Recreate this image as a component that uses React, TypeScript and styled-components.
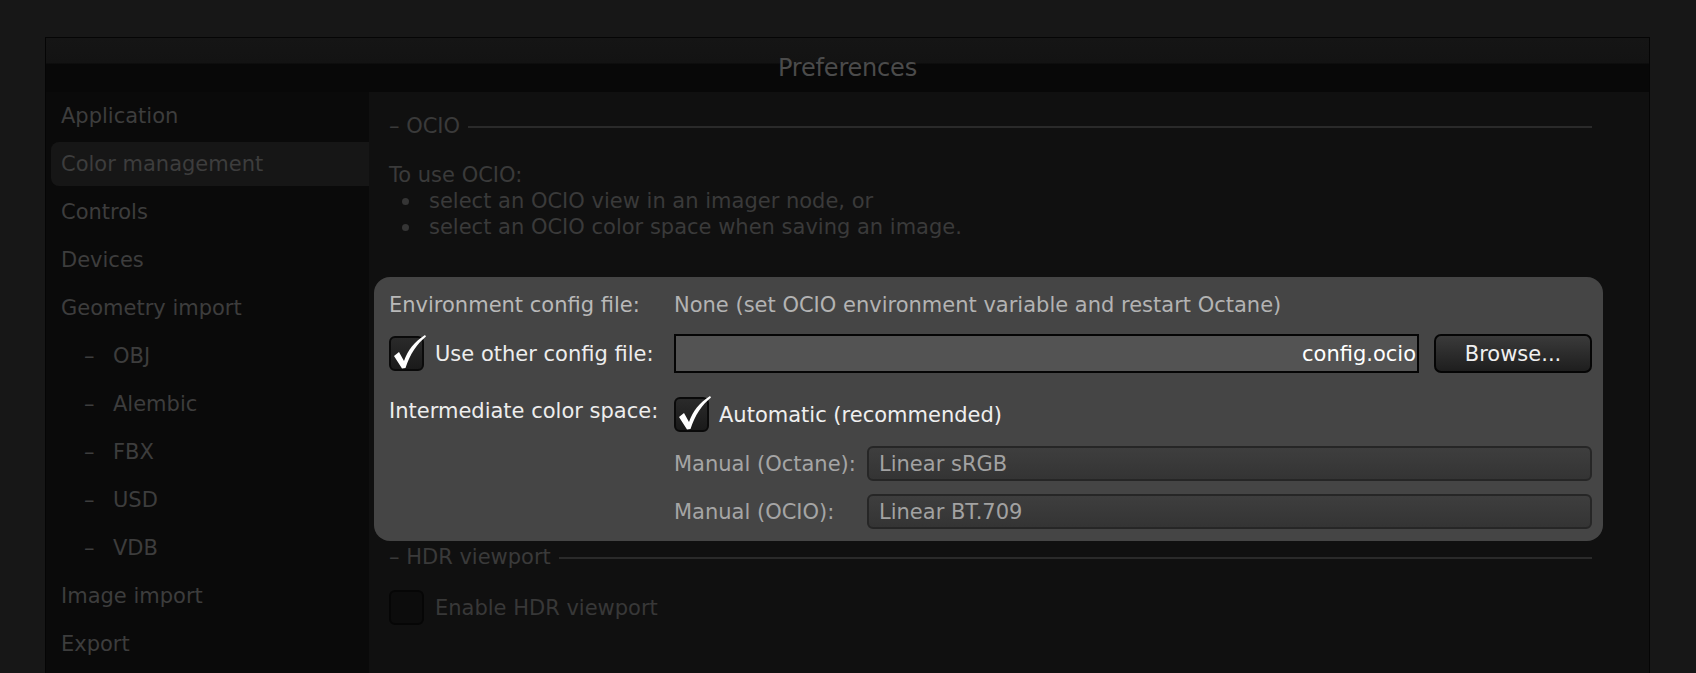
import styled, { createGlobalStyle } from 'styled-components';

const GlobalStyle = createGlobalStyle`
    html, body {
        margin: 0;
        padding: 0;
        height: 100%;
        overflow: hidden;
        background: #171717;
        font-family: "DejaVu Sans", "Liberation Sans", sans-serif;
    }
`;

const Page = styled.div`
    padding: 37px 46px 0 45px;
`;

const Dialog = styled.div`
    border: 1px solid #050505;
    border-bottom: none;
    background: #101010;
    height: 700px;
    display: flex;
    flex-direction: column;
`;

const TitleBar = styled.div`
    height: 54px;
    box-sizing: border-box;
    padding-top: 5px;
    display: flex;
    align-items: center;
    justify-content: center;
    background: linear-gradient(#151515 0, #131313 25px, #080808 26px, #080808 100%);
    color: #4b4b4b;
    font-size: 24px;
    letter-spacing: -0.2px;
`;

const Body = styled.div`
    flex: 1;
    display: flex;
`;

const Sidebar = styled.div`
    width: 323px;
    background: #0a0a0a;
    display: flex;
    flex-direction: column;
`;

const NavItem = styled.div<{ $selected?: boolean; $sub?: boolean }>`
    height: ${(p) => (p.$selected ? '44px' : '48px')};
    margin: ${(p) => (p.$selected ? '2px 0 2px 5px' : '0 0 0 5px')};
    padding-left: ${(p) => (p.$sub ? '33px' : '10px')};
    display: flex;
    align-items: center;
    gap: 19px;
    font-size: 21px;
    color: #3d3d3d;
    background: ${(p) => (p.$selected ? '#161616' : 'transparent')};
    border-radius: 8px 0 0 8px;
`;

const Dash = styled.span`
    width: 10px;
`;

const Content = styled.div`
    flex: 1;
    padding: 22px 57px 0 20px;
    display: flex;
    flex-direction: column;
    font-size: 21px;
    color: #3a3a3a;
`;

const SectionHeader = styled.div<{ $top?: number }>`
    display: flex;
    align-items: center;
    gap: 8px;
    height: 24px;
    margin-top: ${(p) => p.$top ?? 0}px;
    color: #3a3a3a;

    &::after {
        content: '';
        flex: 1;
        height: 2px;
        margin-top: 2px;
        background: #2a2a2a;
    }
`;

const Intro = styled.div`
    margin-top: 24px;
    line-height: 26px;
`;

const BulletList = styled.ul`
    margin: 0;
    padding-left: 40px;
    list-style: none;

    li {
        position: relative;
    }

    li::before {
        content: '';
        position: absolute;
        left: -27px;
        top: 10px;
        width: 7px;
        height: 7px;
        border-radius: 50%;
        background: #353535;
    }
`;

const Highlight = styled.div`
    margin: 37px -11px 0 -15px;
    padding: 14px 11px 12px 15px;
    background: #454545;
    border-radius: 16px;
    display: flex;
    flex-direction: column;
`;

const Row = styled.div<{ $top?: number; $align?: string }>`
    display: flex;
    align-items: ${(p) => p.$align ?? 'center'};
    margin-top: ${(p) => p.$top ?? 0}px;
`;

const LabelCell = styled.div<{ $color?: string }>`
    width: 285px;
    flex-shrink: 0;
    display: flex;
    align-items: center;
    gap: 11px;
    color: ${(p) => p.$color ?? '#ededed'};
    line-height: 28px;
`;

const Value = styled.div<{ $color?: string }>`
    color: ${(p) => p.$color ?? '#b3b3b3'};
    line-height: 28px;
`;

const FieldGroup = styled.div`
    flex: 1;
    display: flex;
    gap: 15px;
`;

const TextField = styled.div`
    flex: 1;
    height: 39px;
    box-sizing: border-box;
    border: 2px solid #050505;
    background: #535353;
    color: #ffffff;
    display: flex;
    align-items: center;
    justify-content: flex-end;
    padding-right: 1px;
`;

const Button = styled.div`
    width: 158px;
    height: 39px;
    box-sizing: border-box;
    border: 2px solid #050505;
    border-radius: 7px;
    background: linear-gradient(#3a3a3a, #1e1e1e);
    color: #f0f0f0;
    display: flex;
    align-items: center;
    justify-content: center;
`;

const Column = styled.div`
    flex: 1;
    display: flex;
    flex-direction: column;
`;

const SubRow = styled.div<{ $top?: number }>`
    display: flex;
    align-items: center;
    margin-top: ${(p) => p.$top ?? 0}px;
`;

const SubLabel = styled.div`
    width: 193px;
    color: #a5a5a5;
`;

const Dropdown = styled.div`
    flex: 1;
    height: 35px;
    box-sizing: border-box;
    border: 2px solid #262626;
    border-radius: 6px;
    background: linear-gradient(#3e3e3e, #343434);
    color: #a2a2a2;
    display: flex;
    align-items: center;
    padding-left: 10px;
`;

const Box = styled.div<{ $dim?: boolean }>`
    width: 35px;
    height: 35px;
    box-sizing: border-box;
    flex-shrink: 0;
    border: 2px solid ${(p) => (p.$dim ? '#060606' : '#0a0a0a')};
    border-radius: 6px;
    background: ${(p) => (p.$dim ? '#0c0c0c' : 'linear-gradient(#2a2a2a, #1a1a1a)')};
    position: relative;

    svg {
        position: absolute;
        left: 1px;
        top: -4px;
        overflow: visible;
    }
`;

const Check = () => (
    <svg width="34" height="37" viewBox="0 0 34 37">
        <path
            d="M2 22 L7 18 L12 27 C16 16 22 8 33 1 L34 2.5 C25 10 18 20 13.5 34 L10 34.5 Z"
            fill="#ffffff"
        />
    </svg>
);

const CheckBox = ({ checked, dim }: { checked?: boolean; dim?: boolean }) => (
    <Box $dim={dim}>{checked && <Check />}</Box>
);

const HdrRow = styled.div`
    display: flex;
    align-items: center;
    gap: 11px;
    margin-top: 21px;
    color: #383838;
`;

type NavEntry = { name: string; sub?: boolean; selected?: boolean };

const navItems: NavEntry[] = [
    { name: 'Application' },
    { name: 'Color management', selected: true },
    { name: 'Controls' },
    { name: 'Devices' },
    { name: 'Geometry import' },
    { name: 'OBJ', sub: true },
    { name: 'Alembic', sub: true },
    { name: 'FBX', sub: true },
    { name: 'USD', sub: true },
    { name: 'VDB', sub: true },
    { name: 'Image import' },
    { name: 'Export' },
];

function App() {
    return (
        <>
            <GlobalStyle />
            <Page>
                <Dialog>
                    <TitleBar>Preferences</TitleBar>
                    <Body>
                        <Sidebar>
                            {navItems.map((item, i) => (
                                <NavItem key={i} $sub={item.sub} $selected={item.selected}>
                                    {item.sub && <Dash>–</Dash>}
                                    {item.name}
                                </NavItem>
                            ))}
                        </Sidebar>
                        <Content>
                            <SectionHeader>– OCIO</SectionHeader>
                            <Intro>
                                To use OCIO:
                                <BulletList>
                                    <li>select an OCIO view in an imager node, or</li>
                                    <li>select an OCIO color space when saving an image.</li>
                                </BulletList>
                            </Intro>
                            <Highlight>
                                <Row>
                                    <LabelCell $color="#b9b9b9">Environment config file:</LabelCell>
                                    <Value>None (set OCIO environment variable and restart Octane)</Value>
                                </Row>
                                <Row $top={15}>
                                    <LabelCell>
                                        <CheckBox checked />
                                        Use other config file:
                                    </LabelCell>
                                    <FieldGroup>
                                        <TextField>config.ocio</TextField>
                                        <Button>Browse...</Button>
                                    </FieldGroup>
                                </Row>
                                <Row $top={24} $align="flex-start">
                                    <LabelCell>Intermediate color space:</LabelCell>
                                    <Column>
                                        <SubRow>
                                            <CheckBox checked />
                                            <Value $color="#efefef" style={{ marginLeft: 10 }}>
                                                Automatic (recommended)
                                            </Value>
                                        </SubRow>
                                        <SubRow $top={14}>
                                            <SubLabel>Manual (Octane):</SubLabel>
                                            <Dropdown>Linear sRGB</Dropdown>
                                        </SubRow>
                                        <SubRow $top={13}>
                                            <SubLabel>Manual (OCIO):</SubLabel>
                                            <Dropdown>Linear BT.709</Dropdown>
                                        </SubRow>
                                    </Column>
                                </Row>
                            </Highlight>
                            <SectionHeader $top={4}>– HDR viewport</SectionHeader>
                            <HdrRow>
                                <CheckBox dim />
                                Enable HDR viewport
                            </HdrRow>
                        </Content>
                    </Body>
                </Dialog>
            </Page>
        </>
    );
}

export default App;
